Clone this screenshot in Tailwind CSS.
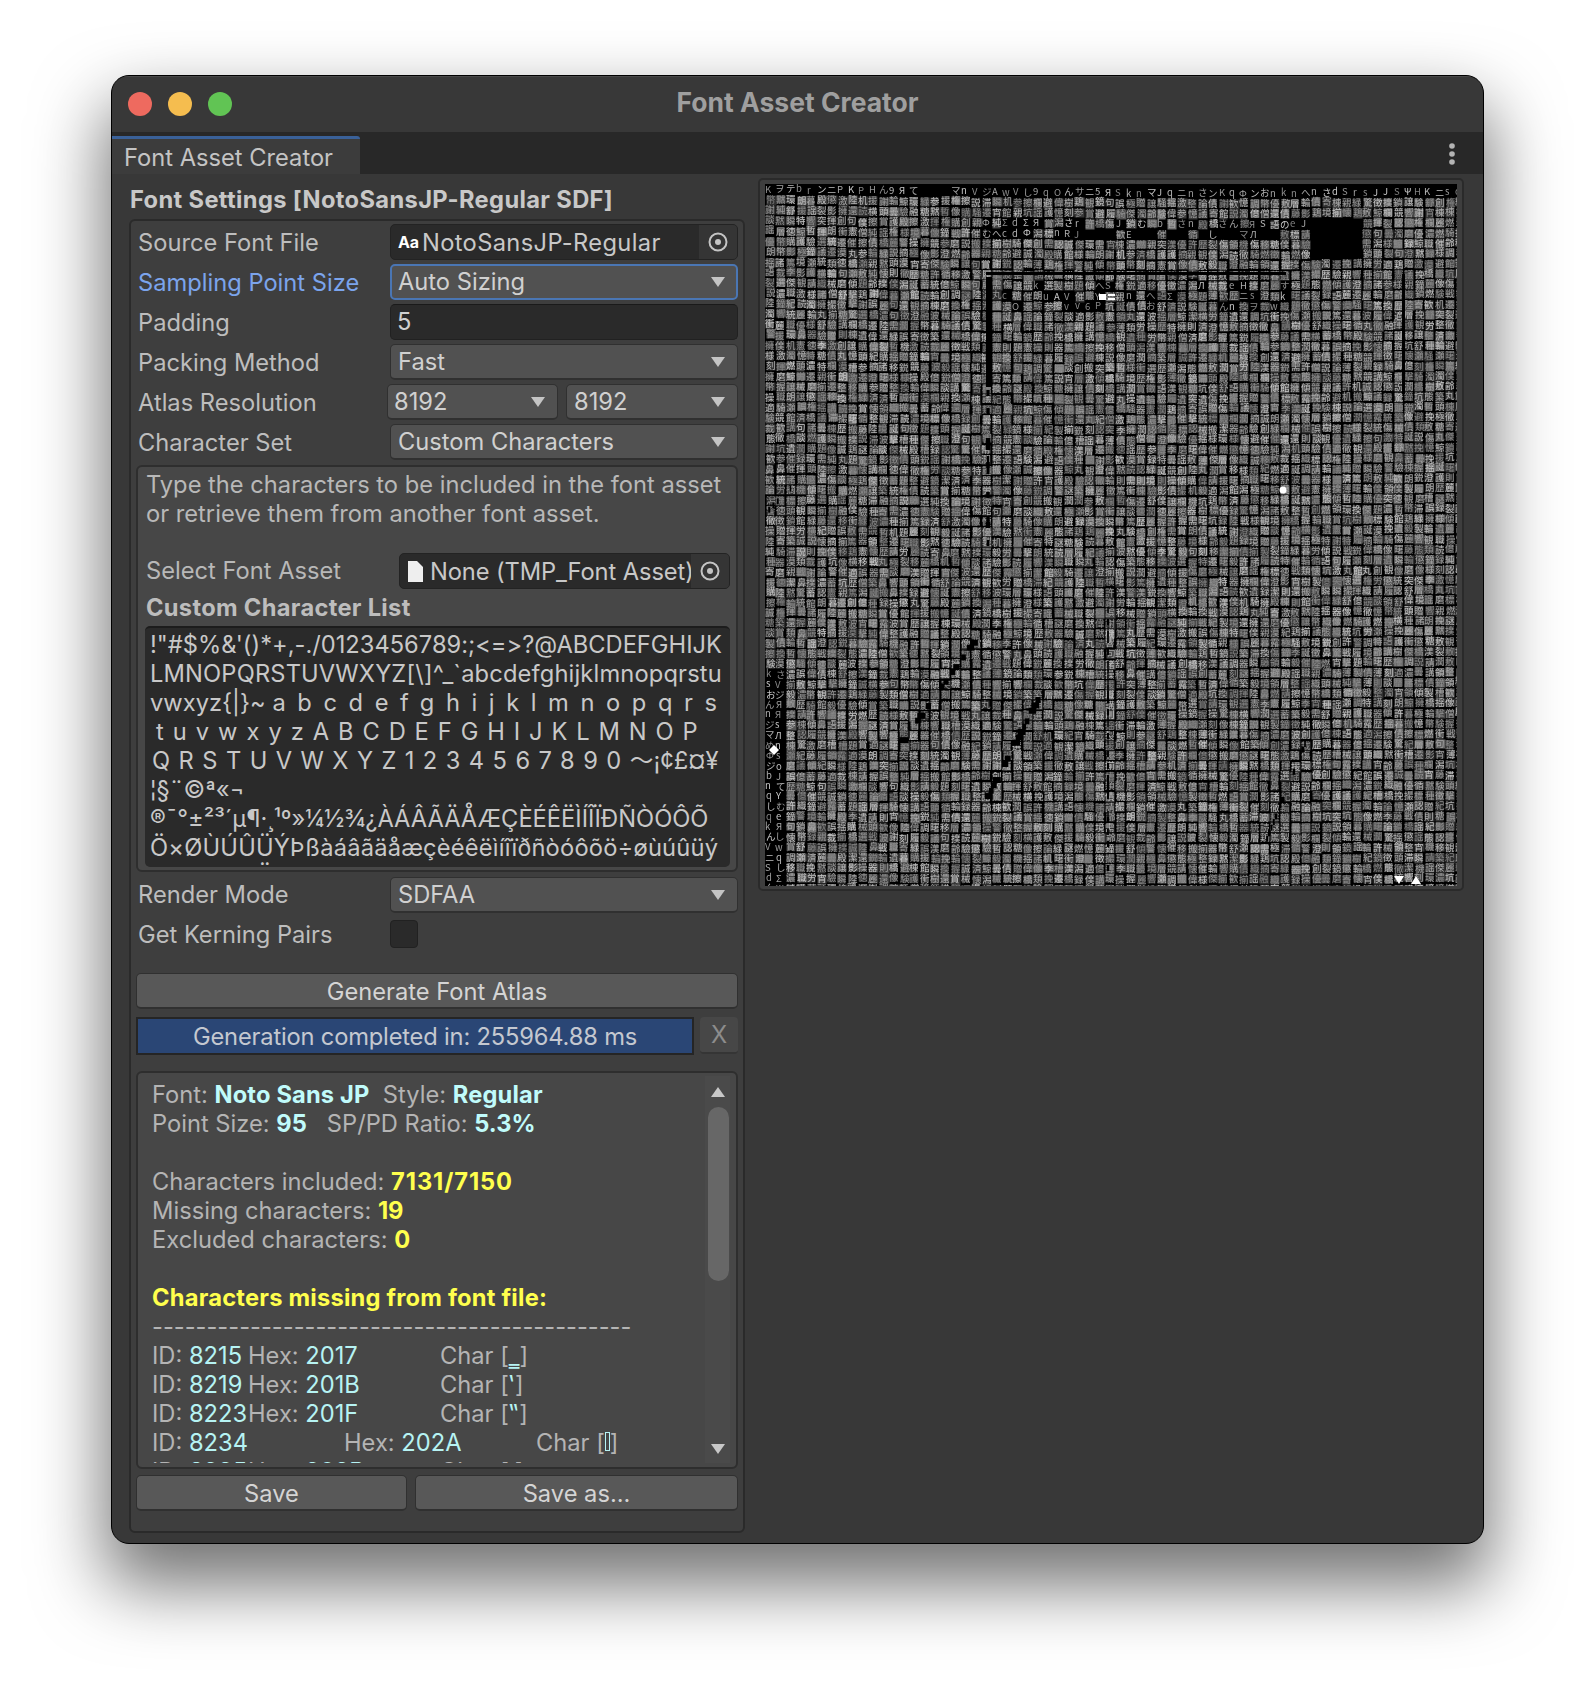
<!DOCTYPE html>
<html lang="en">
<head>
    <meta charset="UTF-8">
    <meta name="viewport" content="width=device-width, initial-scale=1.0">
    <title>Font Asset Creator</title>
    <script src="https://cdn.jsdelivr.net/npm/@tailwindcss/browser@4"></script>
</head>
<body class="bg-white font-[Inter,'Noto_Sans_CJK_JP',sans-serif] text-[23.7px] text-[#bdbdbd] w-[1596px] h-[1692px] overflow-hidden">
    <div class="pt-[75px] pl-[111px]">
    <!-- window -->
    <div class="w-[1373px] h-[1469px] rounded-[18px] bg-[#383838] border border-black shadow-[0_36px_70px_6px_rgba(0,0,0,0.55)] overflow-hidden flex flex-col">

        <!-- title bar -->
        <div class="h-[56px] shrink-0 flex items-center relative border-t border-[#5a5a5a]/50">
            <div class="flex gap-[16px] pl-[16px] pb-[2px]">
                <span class="w-[24px] h-[24px] rounded-full bg-[#ee6a5f]"></span>
                <span class="w-[24px] h-[24px] rounded-full bg-[#f5bd4f]"></span>
                <span class="w-[24px] h-[24px] rounded-full bg-[#61c454]"></span>
            </div>
            <p class="absolute inset-x-0 top-[6px] text-center text-[26.5px] font-bold text-[#9f9f9f]">Font Asset Creator</p>
        </div>

        <!-- tab bar -->
        <div class="h-[42px] shrink-0 bg-[#282828] flex items-end justify-between">
            <div class="w-[248px] h-[38px] bg-[#3c3c3c] border-t-[3px] border-[#3a6199] rounded-tr-[3px] pl-[12px] leading-[37px] text-[#c4c4c4]">Font Asset Creator</div>
            <svg class="w-[8px] h-[24px] mr-[27px] mb-[8px]" viewBox="0 0 8 24" fill="#b4b4b4"><circle cx="4" cy="4" r="2.8"/><circle cx="4" cy="12" r="2.8"/><circle cx="4" cy="20" r="2.8"/></svg>
        </div>

        <div class="flex flex-1">
            <!-- settings column -->
            <div class="w-[616px] ml-[17px] shrink-0">
                <h2 class="h-[45px] pt-[11px] pl-[1px] leading-[30px] font-bold tracking-[0.35px] text-[#c8c8c8] whitespace-nowrap">Font Settings [NotoSansJP-Regular SDF]</h2>

                <div class="h-[1314px] border-2 border-[#2a2a2a] rounded-[6px] bg-[#3e3e3e] px-[5px] pt-[3px]">
                    <div class="flex items-center h-[36px] pl-[2px]">
                        <span class="w-[252px] shrink-0 pt-[2px]">Source Font File</span>
                        <div class="flex-1 h-[36px] bg-[#2a2a2a] rounded-[5px] border border-[#232323] flex items-center overflow-hidden">
                            <span class="w-[31px] text-center text-[16px] font-bold text-white pl-[4px]">Aa</span>
                            <span class="flex-1 text-[#c8c8c8] pt-[2px] tracking-[0.35px]">NotoSansJP-Regular</span>
                            <span class="w-[38px] h-full bg-[#353535] flex items-center justify-center">
                                <svg class="w-[20px] h-[20px]" viewBox="0 0 20 20" fill="none" stroke="#c4c4c4" stroke-width="2"><circle cx="10" cy="10" r="8.5"/><circle cx="10" cy="10" r="3" fill="#c4c4c4" stroke="none"/></svg>
                            </span>
                        </div>
                    </div>
                    <div class="flex items-center h-[36px] mt-[4px] pl-[2px]">
                        <span class="w-[252px] shrink-0 pt-[2px] text-[#7ba4ec]">Sampling Point Size</span>
                        <div class="flex-1 h-[36px] bg-[#515151] rounded-[5px] border-2 border-[#4a76b4] flex items-center justify-between pl-[6px] pr-[11px] text-[#d0d0d0]">
                            <span>Auto Sizing</span>
                            <svg class="w-[14px] h-[10px]" viewBox="0 0 14 10" fill="#c4c4c4"><path d="M0 0h14L7 10z"/></svg>
                        </div>
                    </div>
                    <div class="flex items-center h-[36px] mt-[4px] pl-[2px]">
                        <span class="w-[252px] shrink-0 pt-[2px]">Padding</span>
                        <div class="flex-1 h-[36px] bg-[#2a2a2a] rounded-[5px] border border-[#212121] border-t-[#1a1a1a] pl-[6px] leading-[34px] text-[#d0d0d0]">5</div>
                    </div>
                    <div class="flex items-center h-[36px] mt-[4px] pl-[2px]">
                        <span class="w-[252px] shrink-0 pt-[2px]">Packing Method</span>
                        <div class="flex-1 h-[36px] bg-[#515151] rounded-[5px] border border-[#303030] border-b-2 flex items-center justify-between pl-[7px] pr-[12px] text-[#d0d0d0]">
                            <span>Fast</span>
                            <svg class="w-[14px] h-[10px]" viewBox="0 0 14 10" fill="#c4c4c4"><path d="M0 0h14L7 10z"/></svg>
                        </div>
                    </div>
                    <div class="flex items-center h-[36px] mt-[4px] pl-[2px]">
                        <span class="w-[249px] shrink-0 pt-[2px]">Atlas Resolution</span>
                        <div class="w-[171px] h-[36px] bg-[#515151] rounded-[5px] border border-[#303030] border-b-2 flex items-center justify-between pl-[6px] pr-[12px] text-[#d0d0d0]">
                            <span>8192</span>
                            <svg class="w-[14px] h-[10px]" viewBox="0 0 14 10" fill="#c4c4c4"><path d="M0 0h14L7 10z"/></svg>
                        </div>
                        <div class="flex-1 ml-[8px] h-[36px] bg-[#515151] rounded-[5px] border border-[#303030] border-b-2 flex items-center justify-between pl-[7px] pr-[12px] text-[#d0d0d0]">
                            <span>8192</span>
                            <svg class="w-[14px] h-[10px]" viewBox="0 0 14 10" fill="#c4c4c4"><path d="M0 0h14L7 10z"/></svg>
                        </div>
                    </div>
                    <div class="flex items-center h-[36px] mt-[4px] pl-[2px]">
                        <span class="w-[252px] shrink-0 pt-[2px]">Character Set</span>
                        <div class="flex-1 h-[36px] bg-[#515151] rounded-[5px] border border-[#303030] border-b-2 flex items-center justify-between pl-[7px] pr-[12px] text-[#d0d0d0]">
                            <span>Custom Characters</span>
                            <svg class="w-[14px] h-[10px]" viewBox="0 0 14 10" fill="#c4c4c4"><path d="M0 0h14L7 10z"/></svg>
                        </div>
                    </div>

                    <!-- custom characters -->
                    <div class="h-[407px] mt-[5px] border-2 border-[#2e2e2e] rounded-[6px] bg-[#474747] pl-[8px] pr-[6px]">
                        <p class="leading-[29px] pt-[3px] text-[#b8b8b8]">Type the characters to be included in the font asset<br>or retrieve them from another font asset.</p>
                        <div class="flex items-center h-[36px] mt-[25px]">
                            <span class="w-[253px] shrink-0 text-[#b8b8b8]">Select Font Asset</span>
                            <div class="flex-1 h-[36px] bg-[#2a2a2a] rounded-[5px] border border-[#232323] flex items-center overflow-hidden">
                                <svg class="w-[15px] h-[21px] ml-[8px] mr-[7px] shrink-0" viewBox="0 0 15 21" fill="#eeeeee"><path d="M0 0h9l6 6v15H0z"/></svg>
                                <span class="flex-1 min-w-0 text-[#c8c8c8] pt-[1px] whitespace-nowrap tracking-[-0.1px]">None (TMP_Font Asset)</span>
                                <span class="w-[38px] h-full bg-[#353535] flex items-center justify-center shrink-0">
                                    <svg class="w-[20px] h-[20px]" viewBox="0 0 20 20" fill="none" stroke="#c4c4c4" stroke-width="2"><circle cx="10" cy="10" r="8.5"/><circle cx="10" cy="10" r="3" fill="#c4c4c4" stroke="none"/></svg>
                                </span>
                            </div>
                        </div>
                        <h3 class="h-[37px] leading-[37px] font-bold tracking-[0.3px] text-[#bdbdbd]">Custom Character List</h3>
                        <div class="h-[241px] -ml-[1px] bg-[#2a2a2a] rounded-[5px] border-t-2 border-[#1c1c1c] pl-[5px] pt-[2px] leading-[29px] text-[#c8c8c8] whitespace-nowrap overflow-hidden [font-variant-ligatures:none] [font-feature-settings:'calt'_0]">
                            <div>!"#$%&amp;'()*+,-./0123456789:;&lt;=&gt;?@ABCDEFGHIJK</div>
                            <div class="tracking-[0.15px]">LMNOPQRSTUVWXYZ[\]^_`abcdefghijklmnopqrstu</div>
                            <div>vwxyz{|}~ <span class="tracking-[11.6px]">abcdefghijklmnopqrs</span></div>
                            <div class="pl-[6px]"><span class="tracking-[9px]">tuvwxyz</span><span class="tracking-[8.9px]">ABCDEFGHIJKLMNOP</span></div>
                            <div class="tracking-[8.45px] pl-[2px]">QRSTUVWXYZ1234567890<span class="tracking-normal">〜¡¢£¤¥</span></div>
                            <div>¦§¨©ª«¬</div>
                            <div>®¯°±²³´µ¶·¸¹º»¼½¾¿ÀÁÂÃÄÅÆÇÈÉÊËÌÍÎÏÐÑÒÓÔÕ</div>
                            <div class="tracking-[0.2px]">Ö×ØÙÚÛÜÝÞßàáâãäåæçèéêëìíîïðñòóôõö÷øùúûüý</div>
                            <div class="pl-[106px]">Ü</div>
                        </div>
                    </div>

                    <div class="flex items-center h-[36px] mt-[5px] pl-[2px]">
                        <span class="w-[252px] shrink-0">Render Mode</span>
                        <div class="flex-1 h-[36px] bg-[#515151] rounded-[5px] border border-[#303030] border-b-2 flex items-center justify-between pl-[7px] pr-[12px] text-[#d0d0d0]">
                            <span>SDFAA</span>
                            <svg class="w-[14px] h-[10px]" viewBox="0 0 14 10" fill="#c4c4c4"><path d="M0 0h14L7 10z"/></svg>
                        </div>
                    </div>
                    <div class="flex items-center h-[28px] mt-[7px] pl-[2px]">
                        <span class="w-[252px] shrink-0 pt-[2px]">Get Kerning Pairs</span>
                        <span class="w-[28px] h-[28px] bg-[#2a2a2a] rounded-[4px] border border-[#212121]"></span>
                    </div>

                    <button class="block w-full h-[36px] mt-[25px] pb-[1px] bg-[#585858] rounded-[5px] border border-[#303030] border-b-2 text-[#d4d4d4]">Generate Font Atlas</button>

                    <!-- progress -->
                    <div class="flex mt-[8px] h-[38px] gap-[6px]">
                        <div class="w-[558px] bg-[#2a4675] border-2 border-[#252525] text-center leading-[36px] tracking-[-0.18px] text-[#c4c8d0]">Generation completed in: 255964.88 ms</div>
                        <div class="flex-1 h-[37px] bg-[#474747] rounded-[4px] border-b-2 border-[#353535] text-center leading-[36px] text-[#8c8c8c]">X</div>
                    </div>

                    <!-- results -->
                    <div class="h-[398px] mt-[16px] border-2 border-[#2e2e2e] rounded-[6px] bg-[#474747] flex pb-[4px]">
                        <div class="flex-1 overflow-hidden pl-[14px] pt-[7px] leading-[29px] whitespace-nowrap text-[#b4b4b4]">
                            <div>Font: <b class="font-bold tracking-[0.15px] text-[#c0fbfb]">Noto Sans JP</b>&nbsp; Style: <b class="font-bold tracking-[0.15px] text-[#c0fbfb]">Regular</b></div>
                            <div>Point Size: <b class="font-bold text-[#c0fbfb]">95</b>&nbsp;&nbsp; SP/PD Ratio: <b class="font-bold text-[#c0fbfb]">5.3%</b></div>
                            <div>&nbsp;</div>
                            <div>Characters included: <b class="font-bold tracking-[0.9px] text-[#ffff4d]">7131/7150</b></div>
                            <div>Missing characters: <b class="font-bold text-[#ffff4d]">19</b></div>
                            <div>Excluded characters: <b class="font-bold text-[#ffff4d]">0</b></div>
                            <div>&nbsp;</div>
                            <div class="font-bold tracking-[0.22px] text-[#ffff4d]">Characters missing from font file:</div>
                            <div class="[font-variant-ligatures:none]">--------------------------------------------</div>
                            <div><span class="inline-block w-[96px]">ID: <span class="text-[#b6f3f3]">8215</span></span><span class="inline-block w-[192px]">Hex: <span class="text-[#b6f3f3]">2017</span></span>Char [<span class="text-[#b6f3f3]">‗</span>]</div>
                            <div><span class="inline-block w-[96px]">ID: <span class="text-[#b6f3f3]">8219</span></span><span class="inline-block w-[192px]">Hex: <span class="text-[#b6f3f3]">201B</span></span>Char [<span class="text-[#b6f3f3]">‛</span>]</div>
                            <div><span class="inline-block w-[96px]">ID: <span class="text-[#b6f3f3]">8223</span></span><span class="inline-block w-[192px]">Hex: <span class="text-[#b6f3f3]">201F</span></span>Char [<span class="text-[#b6f3f3]">‟</span>]</div>
                            <div><span class="inline-block w-[192px]">ID: <span class="text-[#b6f3f3]">8234</span></span><span class="inline-block w-[192px]">Hex: <span class="text-[#b6f3f3]">202A</span></span>Char [<span class="inline-block w-[5px] h-[19px] border border-[#b6f3f3]"></span>]</div>
                            <div><span class="inline-block w-[96px]">ID: <span class="text-[#b6f3f3]">8235</span></span><span class="inline-block w-[192px]">Hex: <span class="text-[#b6f3f3]">202B</span></span>Char [<span class="inline-block w-[6px] h-[19px]"></span>]</div>
                        </div>
                        <!-- scrollbar -->
                        <div class="w-[25px] mr-[6px] mt-[3px] flex flex-col items-center bg-[#4a4a4a]">
                            <svg class="w-[14px] h-[10px] mt-[11px]" viewBox="0 0 14 10" fill="#c8c8c8"><path d="M0 10h14L7 0z"/></svg>
                            <div class="w-[21px] h-[174px] mt-[10px] ml-[1px] rounded-full bg-[#676767]"></div>
                            <svg class="w-[14px] h-[10px] mt-[163px]" viewBox="0 0 14 10" fill="#c8c8c8"><path d="M0 0h14L7 10z"/></svg>
                        </div>
                    </div>

                    <div class="flex gap-[8px] mt-[6px]">
                        <button class="w-[271px] h-[36px] pb-[3px] bg-[#585858] rounded-[5px] border border-[#303030] border-b-2 text-[#d4d4d4]">Save</button>
                        <button class="flex-1 h-[36px] pb-[3px] bg-[#585858] rounded-[5px] border border-[#303030] border-b-2 text-[#d4d4d4]">Save as...</button>
                    </div>
                </div>
            </div>

            <!-- atlas preview -->
            <div class="w-[706px] h-[713px] ml-[13px] mt-[4px] border-2 border-[#2a2a2a] rounded-[5px] bg-[#3e3e3e] pl-[5px] pt-[4px]">
                <canvas id="atlas" width="692" height="702" class="block bg-black"></canvas>
            </div>
        </div>
    </div>
    </div>

    <script>
        // fake SDF atlas, packed cells of kanji with dark holes
        const kanji = '寄棟紀坑丸机優循読徴需則移特挽許陸波種宵舒講鋭突済刻参季労句朗純統領創揃極械機緑樹館観議護購藤織職贈鎖鏡競響題類験驗瞬環境親頭憲操整激濃曇輸融橋燃築篤糖磨録憶薄態誤説認語誠製裁裂衝蓄滞様遺適選遷還避億器輪賞調談誕請論諸謝謎謡警譲鐘露驚騒騎鯨鶏麗麓黙鼻齢偉傑催債傷傾僕僧像層履幣影徹徳懲懐戦握援換揮揺搬摘撃撮撲擁擦敷暮暫曙槽標権横橋欄歓歴殿毅漠漢潔潟潤澄濁瀬';
        const small = 'mnokエニへサRVUHYEPdAbdΣΨФЯЛwvnkqocseeucJcKrOS695むめたおしさんすてのマスンテジヲ';
        const ctx = document.getElementById('atlas').getContext('2d');
        let seed = 7131;
        const rnd = () => (seed = (seed * 16807) % 2147483647) / 2147483647;
        const W = 692, H = 702;

        ctx.fillStyle = '#000';
        ctx.fillRect(0, 0, W, H);
        ctx.textBaseline = 'top';

        // empty space left by the packer
        function isHole(x, y) {
            if (x > 542 && x < 592 && y > 24 && y < 66) return true;
            if (x > 300 && x < 545 && y > 38 && y < 46) return true;
            if (y < 11 && x > 145 && x < 185) return true;
            return false;
        }
        // cells of small glyphs on black
        function isSparse(x, y) {
            if (y < 11) return true;
            if (x < 16 && y > 480) return true;
            if (x > 196 && x < 540 && y > 28 && y < 52) return rnd() < 0.6;
            if (x > 232 && x < 520 && y > 96 && y < 124) return rnd() < 0.4;
            return false;
        }

        const pitch = 10.3;
        for (let row = 0; row * pitch < H; row++) {
            for (let col = 0; col * pitch < W; col++) {
                // shelves are a little out of step with each other
                const shift = Math.round(Math.sin(col / 23) * 2 + Math.sin(row / 17 + col / 40) * 2);
                const x = Math.round(col * pitch + rnd() * 0.8), y = Math.round(row * pitch + shift + rnd() * 0.8);
                if (isHole(x, y)) continue;
                const sparse = isSparse(x, y);
                if (!sparse) {
                    const base = 45 + Math.floor(rnd() * rnd() * 80);
                    const w = 8 + Math.floor(rnd() * 2.4), h = 8 + Math.floor(rnd() * 2.4);
                    ctx.fillStyle = `rgb(${base},${base},${base})`;
                    ctx.fillRect(x + 0.5, y + 0.5, w, h);
                }
                const v = 130 + Math.floor(rnd() * 75);
                ctx.fillStyle = `rgb(${v},${v},${v})`;
                ctx.font = '9.5px "Noto Sans CJK JP"';
                const pool = sparse ? small : kanji;
                ctx.fillText(pool[Math.floor(rnd() * pool.length)], x, y);
            }
        }

        // ragged seams between packed regions
        function seam(x0, y0, x1, y1, width, keep) {
            const steps = Math.hypot(x1 - x0, y1 - y0) / 6;
            ctx.fillStyle = '#000';
            for (let i = 0; i < steps; i++) {
                if (rnd() > keep) continue;
                const t = i / steps, w = width * (0.5 + rnd() * 0.7);
                ctx.fillRect(x0 + (x1 - x0) * t - w / 2, y0 + (y1 - y0) * t - 3, w, 6);
            }
        }
        ctx.fillStyle = '#000';
        ctx.fillRect(221, 93, 6, 110);
        ctx.fillRect(221, 88, 300, 3);
        seam(223, 203, 223, 370, 4, 0.45);
        ctx.fillRect(637, 90, 3, 120);
        seam(216, 449, 134, 563, 8, 0.6);
        seam(273, 516, 220, 619, 7, 0.55);
        seam(343, 420, 343, 690, 2, 0.7);
        seam(0, 330, 30, 300, 3, 0.5);
        seam(540, 560, 500, 660, 3, 0.5);

        // brightest glyphs
        ctx.fillStyle = '#fff';
        ctx.fillRect(334, 110, 7, 6);
        ctx.fillRect(343, 110, 7, 2);
        ctx.fillRect(343, 114, 7, 2);
        ctx.beginPath();
        ctx.arc(518, 306, 3.5, 0, 7);
        ctx.fill();
        ctx.beginPath();
        ctx.moveTo(9, 561); ctx.lineTo(14, 566); ctx.lineTo(9, 571); ctx.lineTo(4, 566);
        ctx.fill();
        ctx.beginPath();
        ctx.moveTo(629, 692); ctx.lineTo(639, 692); ctx.lineTo(634, 700);
        ctx.fill();
        ctx.beginPath();
        ctx.moveTo(646, 700); ctx.lineTo(656, 700); ctx.lineTo(651, 692);
        ctx.fill();
    </script>
</body>
</html>
